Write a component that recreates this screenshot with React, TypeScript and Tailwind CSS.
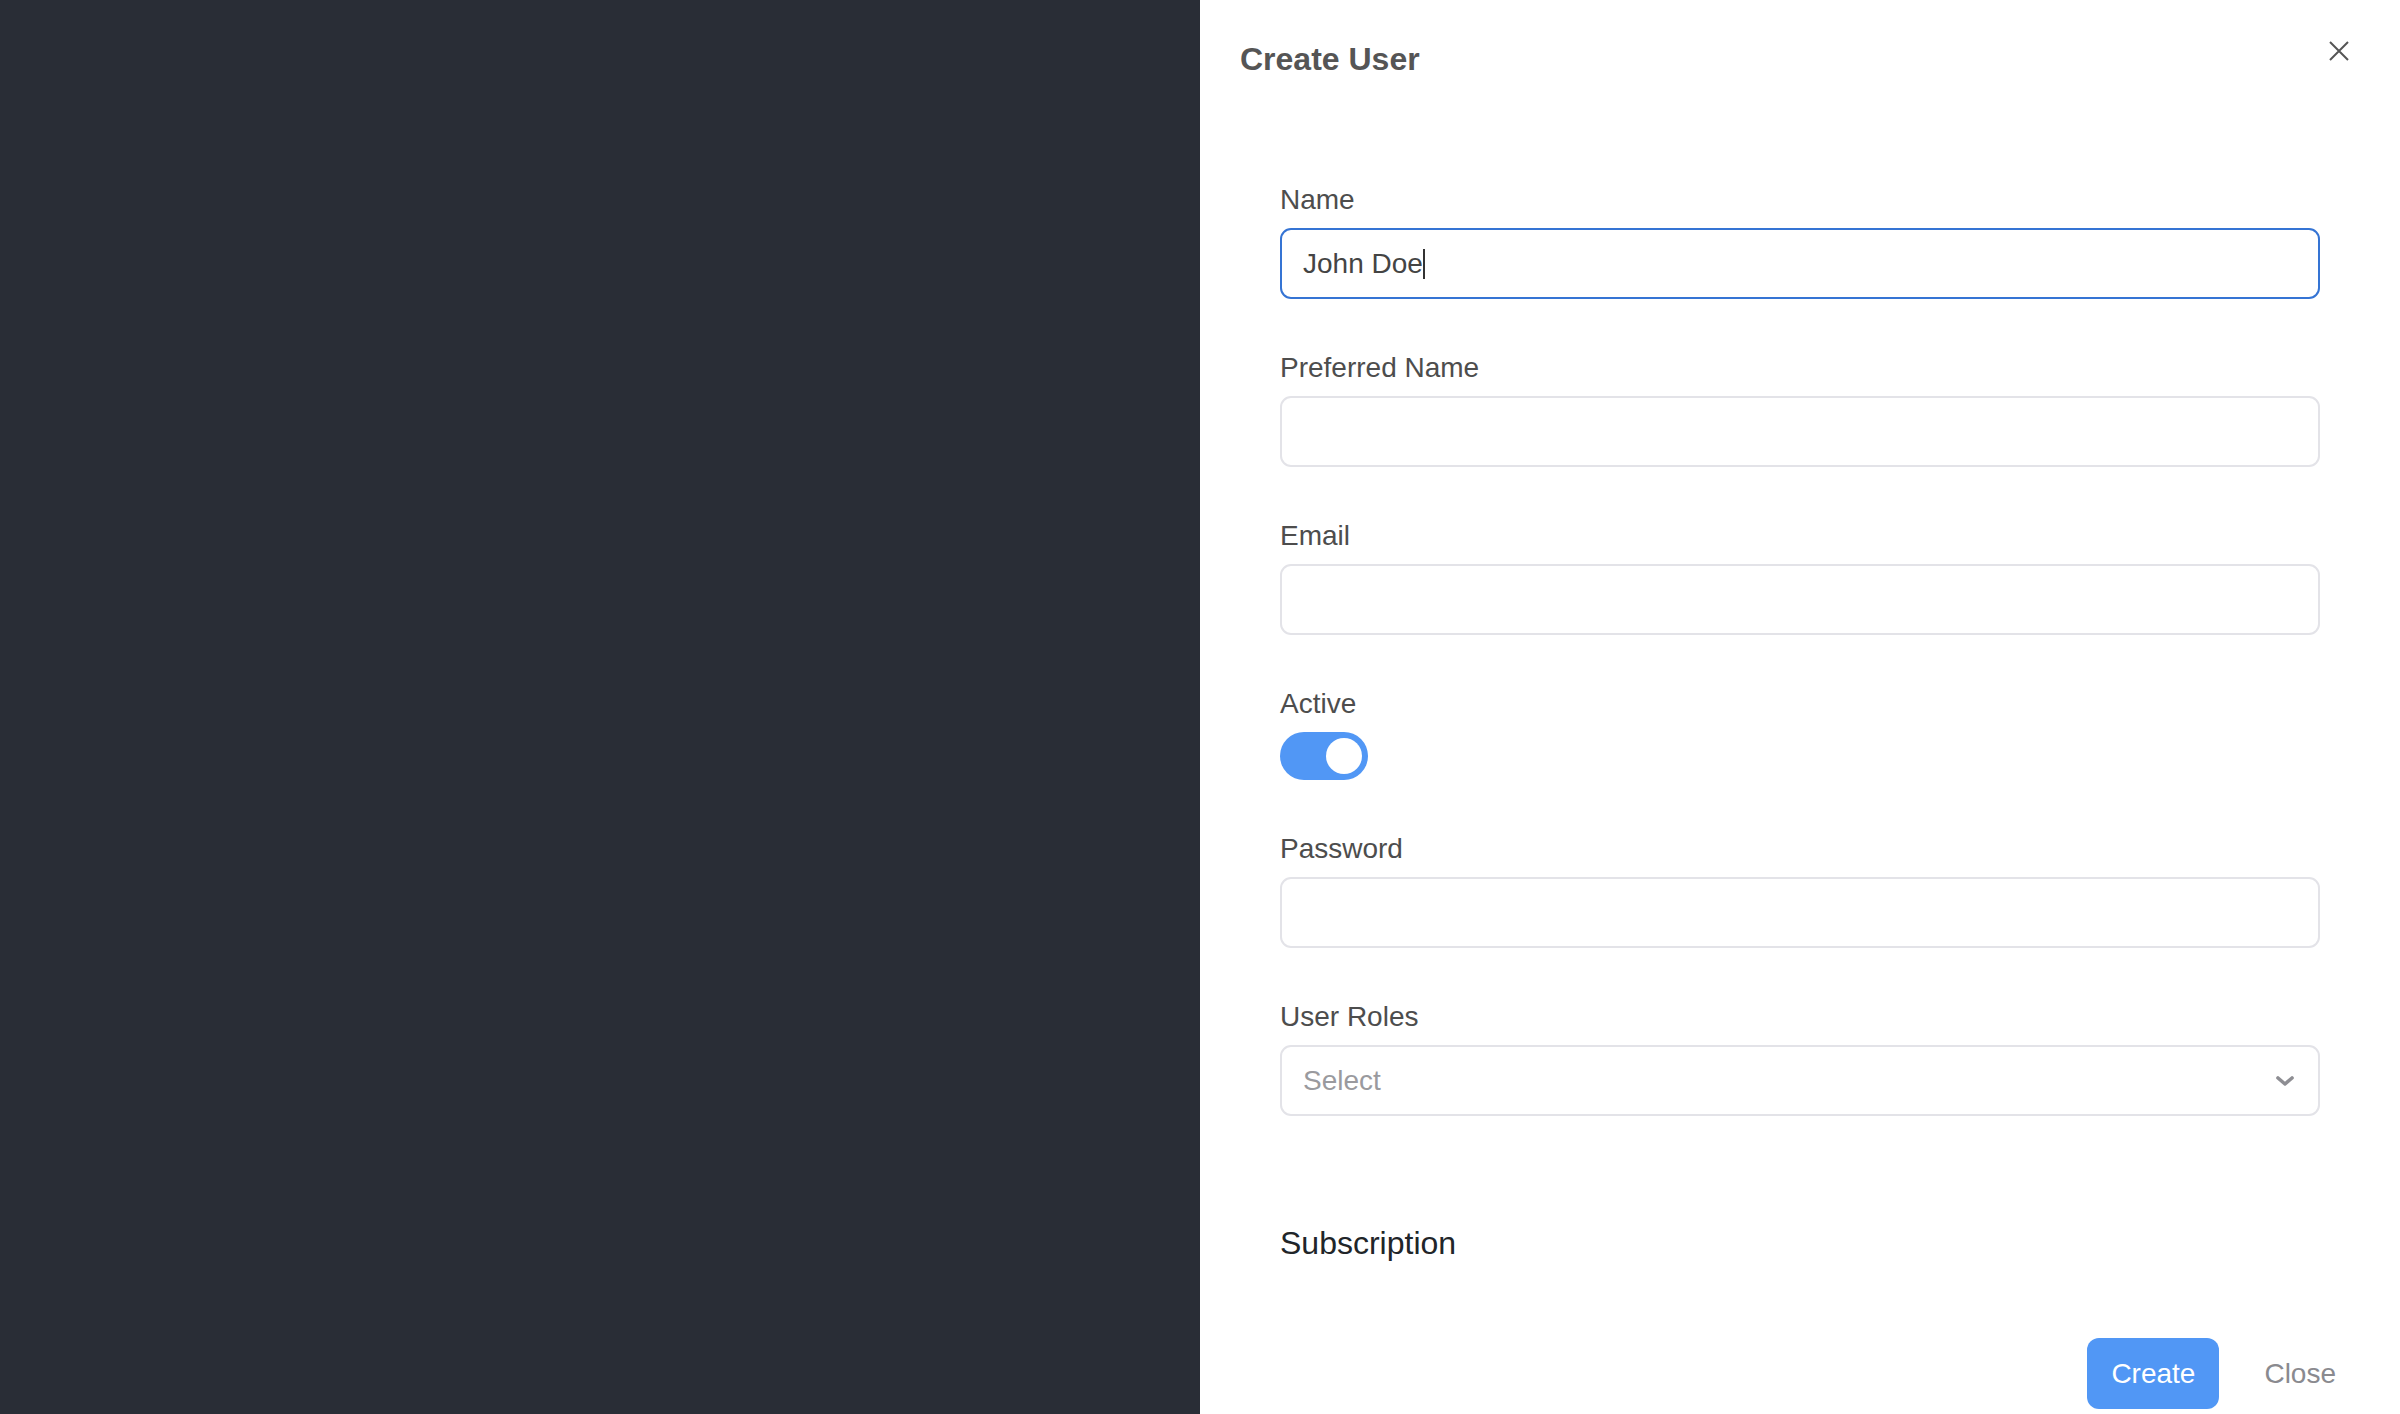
import React from "react";

function Field({ label, children }: { label: string; children: React.ReactNode }) {
  return (
    <div className="mb-[49px]">
      <div className="h-[40px] leading-[40px] text-[28px] text-[#4d4d4d] mb-[8px]">{label}</div>
      {children}
    </div>
  );
}

function TextBox({ focused, children }: { focused?: boolean; children?: React.ReactNode }) {
  return (
    <div
      className={
        "h-[71px] rounded-[11px] border-2 flex items-center px-[21px] text-[28px] text-[#444] bg-white " +
        (focused ? "border-[#3574d4]" : "border-[#e3e3e8]")
      }
    >
      {children}
    </div>
  );
}

export default function App() {
  return (
    <div
      className="w-[2400px] h-[1414px] flex overflow-hidden"
      style={{ fontFamily: '"Liberation Sans", Arial, sans-serif' }}
    >
      <div className="w-[1200px] h-full bg-[#292d36]" />
      <div className="w-[1200px] h-full bg-white relative">
        <div className="pl-[40px] pt-[37px]">
          <div className="h-[44px] leading-[44px] text-[32px] font-bold text-[#555]">Create User</div>
        </div>
        <button className="absolute left-[1128px] top-[40px] w-[22px] h-[22px] flex items-center justify-center">
          <svg width="22" height="22" viewBox="0 0 22 22" fill="none" stroke="#555" strokeWidth="2">
            <path d="M2 2 L20 20 M20 2 L2 20" />
          </svg>
        </button>
        <div className="px-[80px] pt-[99px]">
          <Field label="Name">
            <TextBox focused>
              <span>John Doe</span>
              <span className="inline-block w-[2px] h-[30px] bg-[#333]" />
            </TextBox>
          </Field>
          <Field label="Preferred Name">
            <TextBox />
          </Field>
          <Field label="Email">
            <TextBox />
          </Field>
          <Field label="Active">
            <div className="w-[88px] h-[48px] rounded-full bg-[#5197f5] flex items-center justify-end p-[6px]">
              <div className="w-[36px] h-[36px] rounded-full bg-white" />
            </div>
          </Field>
          <Field label="Password">
            <TextBox />
          </Field>
          <div>
            <div className="h-[40px] leading-[40px] text-[28px] text-[#4d4d4d] mb-[8px]">User Roles</div>
            <div className="h-[71px] rounded-[11px] border-2 border-[#e3e3e8] flex items-center justify-between pl-[21px] pr-[23px] text-[28px] text-[#9a9a9e]">
              <span>Select</span>
              <svg width="20" height="12" viewBox="0 0 20 12" fill="none" stroke="#8e8e93" strokeWidth="3.6" strokeLinecap="round" strokeLinejoin="round">
                <path d="M3 3 L10 9 L17 3" />
              </svg>
            </div>
          </div>
          <div className="mt-[105px] h-[44px] leading-[44px] text-[32px] text-[#212529]">Subscription</div>
        </div>
        <div className="flex justify-end items-center pr-[40px] mt-[73px]">
          <button className="w-[132px] h-[71px] rounded-[12px] bg-[#5197f5] text-white text-[28px]">Create</button>
          <button className="h-[71px] pl-[45px] pr-[24px] text-[28px] text-[#8a8a8f]">Close</button>
        </div>
      </div>
    </div>
  );
}
